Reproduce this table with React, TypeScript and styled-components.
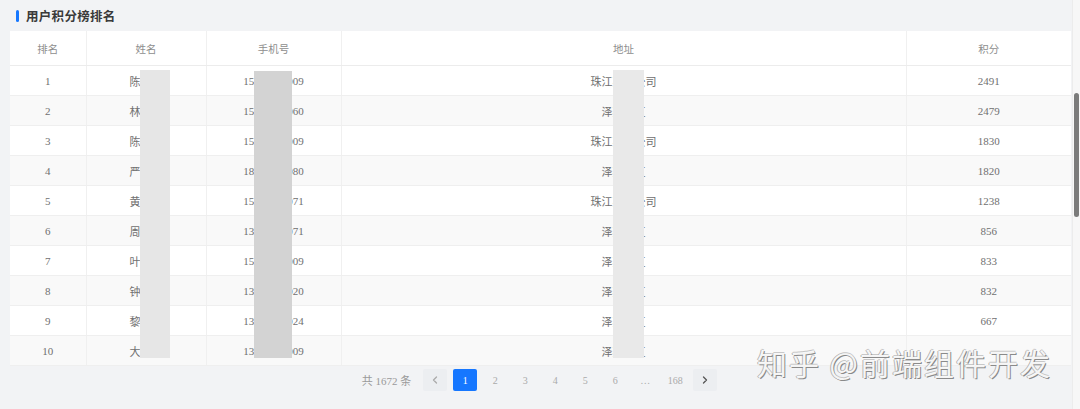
import React from 'react';
import styled, { createGlobalStyle } from 'styled-components';

type Row = {
  rank: number;
  name: string;
  phone: string;
  address: string;
  score: number;
};

const ROWS: Row[] = [
  { rank: 1, name: '陈某某', phone: '15000000009', address: '珠江某某公司', score: 2491 },
  { rank: 2, name: '林某某', phone: '15000000060', address: '泽某某区', score: 2479 },
  { rank: 3, name: '陈某某', phone: '15000000009', address: '珠江某某公司', score: 1830 },
  { rank: 4, name: '严某某', phone: '18000000080', address: '泽某某区', score: 1820 },
  { rank: 5, name: '黄某某', phone: '15000000071', address: '珠江某某公司', score: 1238 },
  { rank: 6, name: '周某某', phone: '13000000071', address: '泽某某区', score: 856 },
  { rank: 7, name: '叶某某', phone: '15000000009', address: '泽某某区', score: 833 },
  { rank: 8, name: '钟某某', phone: '13000000020', address: '泽某某区', score: 832 },
  { rank: 9, name: '黎某某', phone: '13000000024', address: '泽某某区', score: 667 },
  { rank: 10, name: '大某某', phone: '13000000009', address: '泽某某区', score: 645 },
];

const COLUMNS = [
  { key: 'rank', title: '排名', width: 76 },
  { key: 'name', title: '姓名', width: 120 },
  { key: 'phone', title: '手机号', width: 135 },
  { key: 'address', title: '地址', width: 565 },
  { key: 'score', title: '积分', width: 165 },
] as const;

const PAGES = ['1', '2', '3', '4', '5', '6', '…', '168'];

const App: React.FC = () => {
  return (
    <Screen>
      <GlobalStyle />
      <Main>
        <TitleBar>
          <TitleMark />
          <Title>用户积分榜排名</Title>
        </TitleBar>
        <TableWrap>
          <Table>
            <colgroup>
              {COLUMNS.map((c) => (
                <col key={c.key} style={{ width: c.width }} />
              ))}
            </colgroup>
            <thead>
              <tr>
                {COLUMNS.map((c) => (
                  <Th key={c.key}>{c.title}</Th>
                ))}
              </tr>
            </thead>
            <tbody>
              {ROWS.map((r) => (
                <Tr key={r.rank} $striped={r.rank % 2 === 0}>
                  <Td>{r.rank}</Td>
                  <Td>{r.name}</Td>
                  <Td>{r.phone}</Td>
                  <Td>{r.address}</Td>
                  <Td>{r.rank === 10 ? '' : r.score}</Td>
                </Tr>
              ))}
            </tbody>
          </Table>
          {/* privacy blur blocks laid over the name, phone and address columns */}
          <Mask $left={130} $width={30} $top={39} $color="#e6e6e6" />
          <Mask $left={244} $width={38} $top={40} $color="#d3d3d3" />
          <Mask $left={603} $width={31} $top={39} $color="#e9e9e9" />
        </TableWrap>
        <Pager>
          <Total>共 1672 条</Total>
          <PageList>
            <PageButton $boxed>
              <Chevron viewBox="0 0 10 10">
                <path d="M6.5 2 L3.5 5 L6.5 8" />
              </Chevron>
            </PageButton>
            {PAGES.map((p) => (
              <PageButton key={p} $active={p === '1'}>
                {p}
              </PageButton>
            ))}
            <PageButton $boxed $dark>
              <Chevron viewBox="0 0 10 10">
                <path d="M3.5 2 L6.5 5 L3.5 8" />
              </Chevron>
            </PageButton>
          </PageList>
        </Pager>
        <Watermark>知乎 @前端组件开发</Watermark>
      </Main>
      <ScrollTrack>
        <ScrollThumb />
      </ScrollTrack>
    </Screen>
  );
};

export default App;

const GlobalStyle = createGlobalStyle`
  html, body {
    margin: 0;
    padding: 0;
    background: #f2f3f5;
  }
  body {
    font-family: "Liberation Serif", "Noto Sans CJK SC", serif;
  }
`;

const Screen = styled.div`
  display: flex;
  width: 1080px;
  height: 409px;
  overflow: hidden;
  background: #f2f3f5;
`;

const Main = styled.div`
  position: relative;
  flex: 1;
  display: flex;
  flex-direction: column;
  padding: 0 1px 0 10px;
`;

const TitleBar = styled.div`
  display: flex;
  align-items: center;
  gap: 7px;
  height: 31px;
  padding-left: 6px;
`;

const TitleMark = styled.span`
  width: 3px;
  height: 12px;
  border-radius: 2px;
  background: #1677ff;
`;

const Title = styled.span`
  font-family: "Noto Sans CJK SC", sans-serif;
  font-size: 12.5px;
  font-weight: 700;
  color: #3a3a3a;
  letter-spacing: 0.3px;
`;

const TableWrap = styled.div`
  position: relative;
  background: #fff;
`;

const Table = styled.table`
  width: 100%;
  table-layout: fixed;
  border-collapse: collapse;
  font-size: 11px;
  color: #707070;
`;

const Th = styled.th`
  height: 34px;
  padding: 0;
  font-weight: 400;
  color: #8e8e8e;
  font-family: "Noto Sans CJK SC", sans-serif;
  font-size: 10.5px;
  border-right: 1px solid #f0f0f0;
  border-bottom: 1px solid #ececec;
  &:last-child {
    border-right: none;
  }
`;

const Tr = styled.tr<{ $striped: boolean }>`
  background: ${(p) => (p.$striped ? '#f9f9f9' : '#fff')};
`;

const Td = styled.td`
  height: 29px;
  padding: 0;
  text-align: center;
  border-right: 1px solid #f0f0f0;
  border-bottom: 1px solid #efefef;
  white-space: nowrap;
  &:last-child {
    border-right: none;
  }
`;

const Mask = styled.div<{ $left: number; $width: number; $top: number; $color: string }>`
  position: absolute;
  left: ${(p) => p.$left}px;
  top: ${(p) => p.$top}px;
  width: ${(p) => p.$width}px;
  bottom: 8px;
  background: ${(p) => p.$color};
`;

const Pager = styled.div`
  display: flex;
  justify-content: center;
  align-items: center;
  gap: 12px;
  height: 24px;
  margin-top: 2px;
  padding-right: 2px;
`;

const Total = styled.span`
  font-size: 11px;
  color: #9a9a9a;
`;

const PageList = styled.div`
  display: flex;
  gap: 6px;
`;

const PageButton = styled.span<{ $active?: boolean; $boxed?: boolean; $dark?: boolean }>`
  display: flex;
  align-items: center;
  justify-content: center;
  width: 24px;
  height: 22px;
  border-radius: 2px;
  font-size: 10px;
  color: ${(p) => (p.$active ? '#fff' : p.$dark ? '#555' : '#aaa')};
  background: ${(p) => (p.$active ? '#1677ff' : p.$boxed ? '#eceef1' : 'transparent')};
`;

const Chevron = styled.svg`
  width: 10px;
  height: 10px;
  fill: none;
  stroke: currentColor;
  stroke-width: 1.3;
  stroke-linecap: round;
  stroke-linejoin: round;
`;

const Watermark = styled.div`
  position: absolute;
  right: 20px;
  top: 340px;
  font-family: "Noto Sans CJK SC", sans-serif;
  font-size: 30px;
  letter-spacing: 2px;
  color: rgba(255, 255, 255, 0.92);
  text-shadow: 1px 1px 0 #8a8a8a, -1px 0 0 #b5b5b5, 0 -1px 0 #c8c8c8;
  white-space: nowrap;
`;

const ScrollTrack = styled.div`
  width: 8px;
  flex-shrink: 0;
  background: #f7f7f7;
  border-left: 1px solid #ececec;
  padding-top: 93px;
  box-sizing: border-box;
`;

const ScrollThumb = styled.div`
  width: 5px;
  height: 124px;
  margin-left: 1px;
  border-radius: 3px;
  background: #7b7b7b;
`;
